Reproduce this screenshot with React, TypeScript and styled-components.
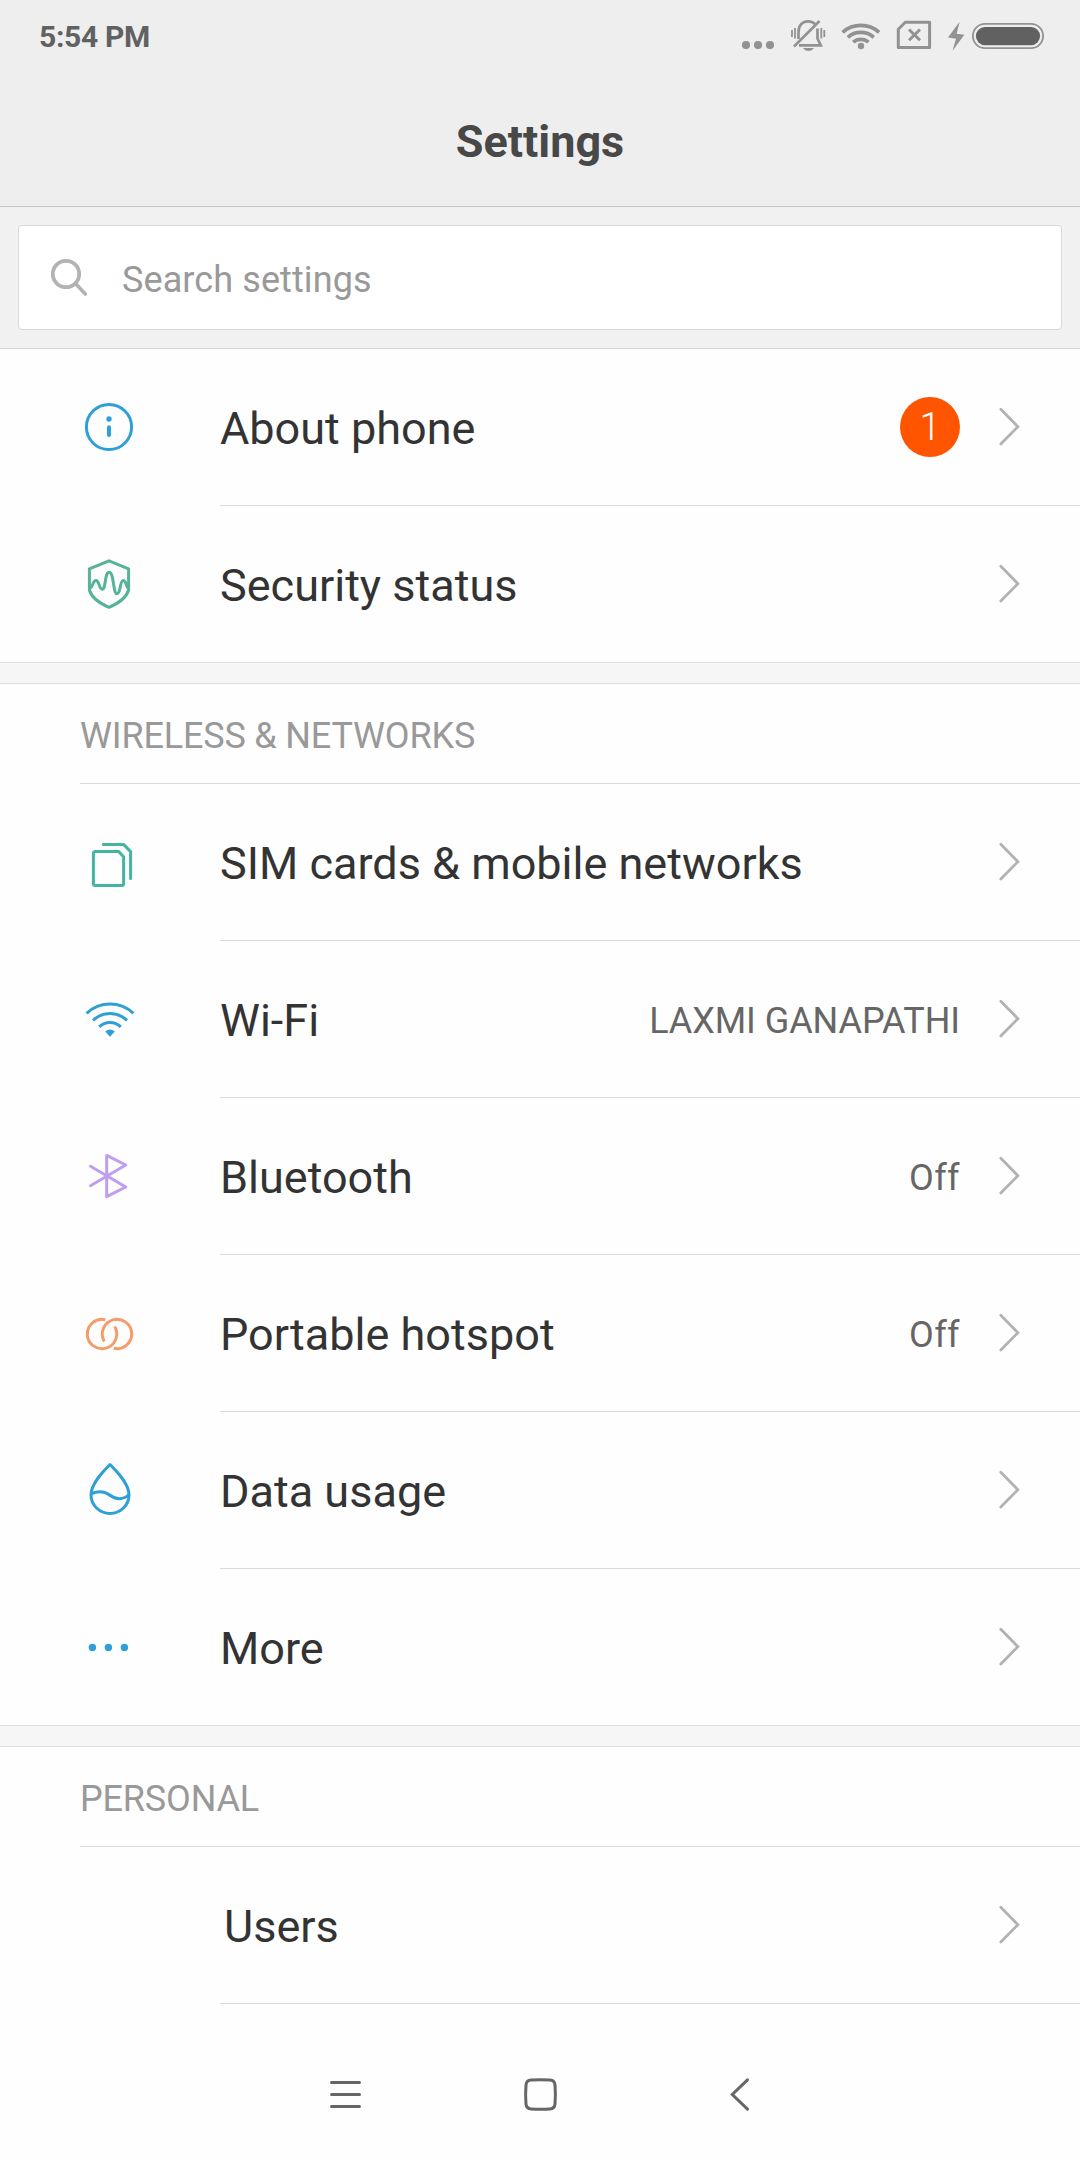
import React from "react";
import styled, { createGlobalStyle } from "styled-components";

const GlobalStyle = createGlobalStyle`
  * { box-sizing: border-box; }
  html, body { margin: 0; padding: 0; background: #fefefe; }
  body { font-family: Roboto, "Noto Sans", sans-serif; }
  svg { display: block; flex: none; }
`;

const BLUE = "#2f9fd8";
const GREEN = "#56b399";
const TEAL = "#44b5a3";
const PURPLE = "#bf9eee";
const ORANGE = "#f69b6a";

const Screen = styled.div`
  width: 1080px;
  height: 2160px;
  display: flex;
  flex-direction: column;
  background: #fefefe;
  overflow: hidden;
`;

const Header = styled.header`
  height: 207px;
  background: #eeeeee;
  border-bottom: 1px solid #c6c6c6;
  display: flex;
  flex-direction: column;
`;

const StatusBar = styled.div`
  height: 72px;
  padding: 0 36px 0 39px;
  display: flex;
  align-items: center;
  justify-content: space-between;
`;

const Clock = styled.time`
  font-size: 30px;
  font-weight: 700;
  line-height: 36px;
  letter-spacing: -0.3px;
  color: #616161;
  padding-top: 1px;
`;

const PageTitle = styled.h1`
  margin: 0;
  padding-top: 5px;
  flex: 1;
  display: flex;
  align-items: center;
  justify-content: center;
  font-size: 45px;
  font-weight: 700;
  color: #484848;
`;

const SearchArea = styled.div`
  height: 142px;
  padding: 18px;
  background: #f1f1f1;
  border-bottom: 1px solid #d6d6d6;
`;

const SearchBox = styled.div`
  height: 105px;
  background: #ffffff;
  border: 1px solid #d8d8d8;
  border-radius: 4px;
  padding-left: 31px;
  display: flex;
  align-items: center;
  gap: 32px;
`;

const Placeholder = styled.span`
  font-size: 36px;
  line-height: 44px;
  letter-spacing: 0.1px;
  padding-top: 5px;
  color: #999999;
`;

const Group = styled.section`
  display: flex;
  flex-direction: column;
`;

const GroupGap = styled.div`
  height: 22px;
  background: #f6f6f6;
  border-top: 1px solid #e0e0e0;
  border-bottom: 1px solid #e0e0e0;
`;

const GroupTitle = styled.h2`
  margin: 0 0 0 80px;
  height: 100px;
  padding-top: 4px;
  display: flex;
  align-items: center;
  border-bottom: 1px solid #d9d9d9;
  font-size: 36px;
  font-weight: 400;
  letter-spacing: -0.17px;
  color: #999999;
`;

const Row = styled.div`
  padding-left: 80px;
  display: flex;
`;

const IconSlot = styled.div`
  width: 140px;
  height: 156px;
  display: flex;
  align-items: center;
`;

const RowBody = styled.div<{ $line: boolean }>`
  flex: 1;
  height: ${(p) => (p.$line ? 157 : 156)}px;
  border-bottom: ${(p) => (p.$line ? "1px solid #d9d9d9" : "none")};
  padding-right: 58px;
  display: flex;
  align-items: center;
`;

const Label = styled.span<{ $indent?: number }>`
  flex: 1;
  font-size: 45px;
  line-height: 54px;
  padding-top: 4px;
  padding-left: ${(p) => p.$indent ?? 0}px;
  color: #333333;
`;

const Value = styled.span<{ $tracking?: number }>`
  font-size: 36px;
  line-height: 44px;
  letter-spacing: ${(p) => p.$tracking ?? 0}px;
  padding-top: 3px;
  margin-right: 38px;
  color: #666666;
`;

const Badge = styled.span`
  width: 60px;
  height: 60px;
  border-radius: 50%;
  background: #ff5500;
  color: #ffffff;
  font-size: 38px;
  font-weight: 300;
  line-height: 60px;
  text-align: center;
  margin-right: 38px;
`;

const NavBar = styled.nav`
  margin-top: auto;
  height: 130px;
  display: flex;
  align-items: center;
  justify-content: center;
  gap: 147px;
`;

const StatusIcons = () => (
  <svg width="304" height="72" viewBox="740 0 304 72" fill="none" stroke="#929292">
    <g fill="#929292" stroke="none">
      <circle cx="746" cy="45" r="4.1" />
      <circle cx="758" cy="45" r="4.1" />
      <circle cx="770" cy="45" r="4.1" />
    </g>
    <g strokeWidth="2.7">
      <path d="M798.5 39V32C798.5 25.5 802.5 21.3 808 21.3C811 21.3 813.3 22.4 815 24" />
      <path d="M817.5 28.5V38.5L820.8 45.4H799" />
      <path d="M794 46.5L819.5 21" />
      <path d="M795 28V38.5M821.3 28V38.5" strokeWidth="1.8" />
      <path d="M792 30V37M824.3 30V37" strokeWidth="1.8" />
    </g>
    <path d="M803 48H814C812 50.4 810.3 51 808.5 51C806.5 51 805 50.4 803 48Z" fill="#929292" stroke="none" />
    <g strokeWidth="3.7">
      <path d="M842.6 32.3A27.5 27.5 0 0 1 879.1 32.3" />
      <path d="M847.8 37.4A19.5 19.5 0 0 1 873.8 37.4" />
      <path d="M853.2 42.2A11.5 11.5 0 0 1 868.5 42.2" />
    </g>
    <circle cx="861" cy="46" r="3.2" fill="#929292" stroke="none" />
    <path d="M898.3 47.5V29.3L905.3 22.3H929.6V47.5Z" strokeWidth="3" strokeLinejoin="round" />
    <path d="M909 29.5L920 40.3M920 29.5L909 40.3" strokeWidth="3" />
    <path d="M959.6 21.7L948 37.6L956 38.8L952.5 50.8L964.4 34.7L956.6 33.7Z" fill="#929292" stroke="none" />
    <rect x="972.9" y="23.9" width="70.2" height="24.2" rx="12.1" strokeWidth="1.8" />
    <rect x="975.9" y="27" width="64.2" height="18.2" rx="9.1" fill="#616161" stroke="none" />
  </svg>
);

const SearchIcon = () => (
  <svg width="40" height="40" viewBox="50 258 40 40" fill="none" stroke="#b3b3b3">
    <circle cx="66" cy="274" r="13.2" strokeWidth="3.8" />
    <path d="M75.5 283.5L85.3 294" strokeWidth="3.6" strokeLinecap="round" />
  </svg>
);

const RowIcon = ({ color, children }: { color: string; children: React.ReactNode }) => (
  <svg
    width="60"
    height="60"
    viewBox="0 0 60 60"
    fill="none"
    stroke={color}
    strokeWidth="3"
    strokeLinecap="round"
    strokeLinejoin="round"
  >
    {children}
  </svg>
);

const InfoIcon = () => (
  <RowIcon color={BLUE}>
    <circle cx="29" cy="30" r="22.6" />
    <circle cx="29" cy="22" r="2.7" fill={BLUE} stroke="none" />
    <path d="M29 30.3V38" strokeWidth="4" />
  </RowIcon>
);

const ShieldIcon = () => (
  <RowIcon color={GREEN}>
    <path d="M29 6.8L48.6 14.8V36C46.5 43.5 38 49.5 29 53.3C20 49.5 11.5 43.5 9.4 36V14.8Z" />
    <path d="M10 34.5C13 33 12.5 26.6 16 26.6C19.5 26.6 19 35.2 22 35.2C26.5 35.2 24.2 18.3 29.2 18.3C34.2 18.3 32.8 39.7 37 39.7C41 39.7 39.5 26.6 43.3 26.6C46.2 26.6 46 32 48.3 34.5" />
  </RowIcon>
);

const SimIcon = () => (
  <RowIcon color={TEAL}>
    <path d="M38.5 19.4H15.4Q13.4 19.4 13.4 21.4V51.6Q13.4 53.6 15.4 53.6H41.6Q43.6 53.6 43.6 51.6V24.7Z" />
    <path d="M23.3 12.4H43.6L50.6 19.6V46.5" />
  </RowIcon>
);

const WifiIcon = () => (
  <RowIcon color={BLUE}>
    <g strokeLinecap="butt">
      <path d="M6.6 24.4A34 34 0 0 1 53.4 24.4" />
      <path d="M13 31.4A24.4 24.4 0 0 1 47 31.4" />
      <path d="M19.2 37.8A15.5 15.5 0 0 1 40.8 37.8" />
    </g>
    <path d="M25.2 42.6Q30 38.4 34.8 42.6L30 47.8Z" fill={BLUE} stroke="none" />
  </RowIcon>
);

const BluetoothIcon = () => (
  <RowIcon color={PURPLE}>
    <path d="M10.5 20.3L45.8 41L26.7 50.6V9.4L45.8 19L10.5 39.7" />
  </RowIcon>
);

const HotspotIcon = () => (
  <RowIcon color={ORANGE}>
    <g strokeLinecap="butt">
      <path d="M25.3 16.7A14.7 14.7 0 1 0 34.7 23.6" />
      <path d="M24.3 38.4A14.7 14.7 0 1 1 33.7 45.3" />
    </g>
  </RowIcon>
);

const DataIcon = () => (
  <RowIcon color={BLUE}>
    <path d="M30 4.5C22 12.5 11 24 11 35A19 18.4 0 0 0 49 35C49 24 38 12.5 30 4.5Z" />
    <path d="M11.5 33.5C19 30.5 24.5 31 30 35.3C35.5 39.6 43 40 48.5 35" />
  </RowIcon>
);

const MoreIcon = () => (
  <RowIcon color={BLUE}>
    <g fill={BLUE} stroke="none">
      <circle cx="12.4" cy="30.4" r="3.7" />
      <circle cx="28.4" cy="30.4" r="3.7" />
      <circle cx="44.4" cy="30.4" r="3.7" />
    </g>
  </RowIcon>
);

const Chevron = () => (
  <svg width="24" height="40" viewBox="0 0 24 40" fill="none" stroke="#b2b2b2" strokeWidth="2.8" strokeLinecap="round">
    <path d="M2.8 2.3L19.9 19.7L2.8 37" />
  </svg>
);

const MenuKey = () => (
  <svg width="48" height="48" viewBox="0 0 48 48" stroke="#666666" strokeWidth="3" strokeLinecap="round">
    <path d="M10.5 11.5H38.5M10.5 23.5H38.5M10.5 35.5H38.5" />
  </svg>
);

const HomeKey = () => (
  <svg width="48" height="48" viewBox="0 0 48 48" fill="none" stroke="#666666" strokeWidth="3">
    <path d="M15 9.1Q24.500 8.300 34 9.1Q38.600 9.500 39 14Q39.800 23.500 39 33Q38.600 37.500 34 37.900Q24.500 38.700 15 37.900Q10.400 37.500 10 33Q9.200 23.500 10 14Q10.400 9.500 15 9.1Z" />
  </svg>
);

const BackKey = () => (
  <svg width="48" height="48" viewBox="0 0 48 48" fill="none" stroke="#666666" strokeWidth="3" strokeLinecap="round">
    <path d="M36.5 8.8L21.3 23.5L36.5 38.2" />
  </svg>
);

type Item = {
  label: string;
  icon?: React.ReactNode;
  value?: string;
  tracking?: number;
  badge?: number;
  indent?: number;
};

type SettingsGroup = { title?: string; items: Item[]; open?: boolean };

const groups: SettingsGroup[] = [
  {
    items: [
      { label: "About phone", icon: <InfoIcon />, badge: 1 },
      { label: "Security status", icon: <ShieldIcon /> },
    ],
  },
  {
    title: "WIRELESS & NETWORKS",
    items: [
      { label: "SIM cards & mobile networks", icon: <SimIcon /> },
      { label: "Wi-Fi", icon: <WifiIcon />, value: "LAXMI GANAPATHI", tracking: -0.07 },
      { label: "Bluetooth", icon: <BluetoothIcon />, value: "Off", tracking: 0.4 },
      { label: "Portable hotspot", icon: <HotspotIcon />, value: "Off", tracking: 0.4 },
      { label: "Data usage", icon: <DataIcon /> },
      { label: "More", icon: <MoreIcon /> },
    ],
  },
  { title: "PERSONAL", items: [{ label: "Users", indent: 4 }], open: true },
];

export default function App() {
  return (
    <>
      <GlobalStyle />
      <Screen>
        <Header>
          <StatusBar>
            <Clock>5:54 PM</Clock>
            <StatusIcons />
          </StatusBar>
          <PageTitle>Settings</PageTitle>
        </Header>
        <SearchArea>
          <SearchBox>
            <SearchIcon />
            <Placeholder>Search settings</Placeholder>
          </SearchBox>
        </SearchArea>
        {groups.map((group, g) => (
          <React.Fragment key={g}>
            {g > 0 && <GroupGap />}
            <Group>
              {group.title && <GroupTitle>{group.title}</GroupTitle>}
              {group.items.map((item, i) => (
                <Row key={item.label}>
                  <IconSlot>{item.icon}</IconSlot>
                  <RowBody $line={Boolean(group.open) || i < group.items.length - 1}>
                    <Label $indent={item.indent}>{item.label}</Label>
                    {item.value && <Value $tracking={item.tracking}>{item.value}</Value>}
                    {item.badge && <Badge>{item.badge}</Badge>}
                    <Chevron />
                  </RowBody>
                </Row>
              ))}
            </Group>
          </React.Fragment>
        ))}
        <NavBar>
          <MenuKey />
          <HomeKey />
          <BackKey />
        </NavBar>
      </Screen>
    </>
  );
}
